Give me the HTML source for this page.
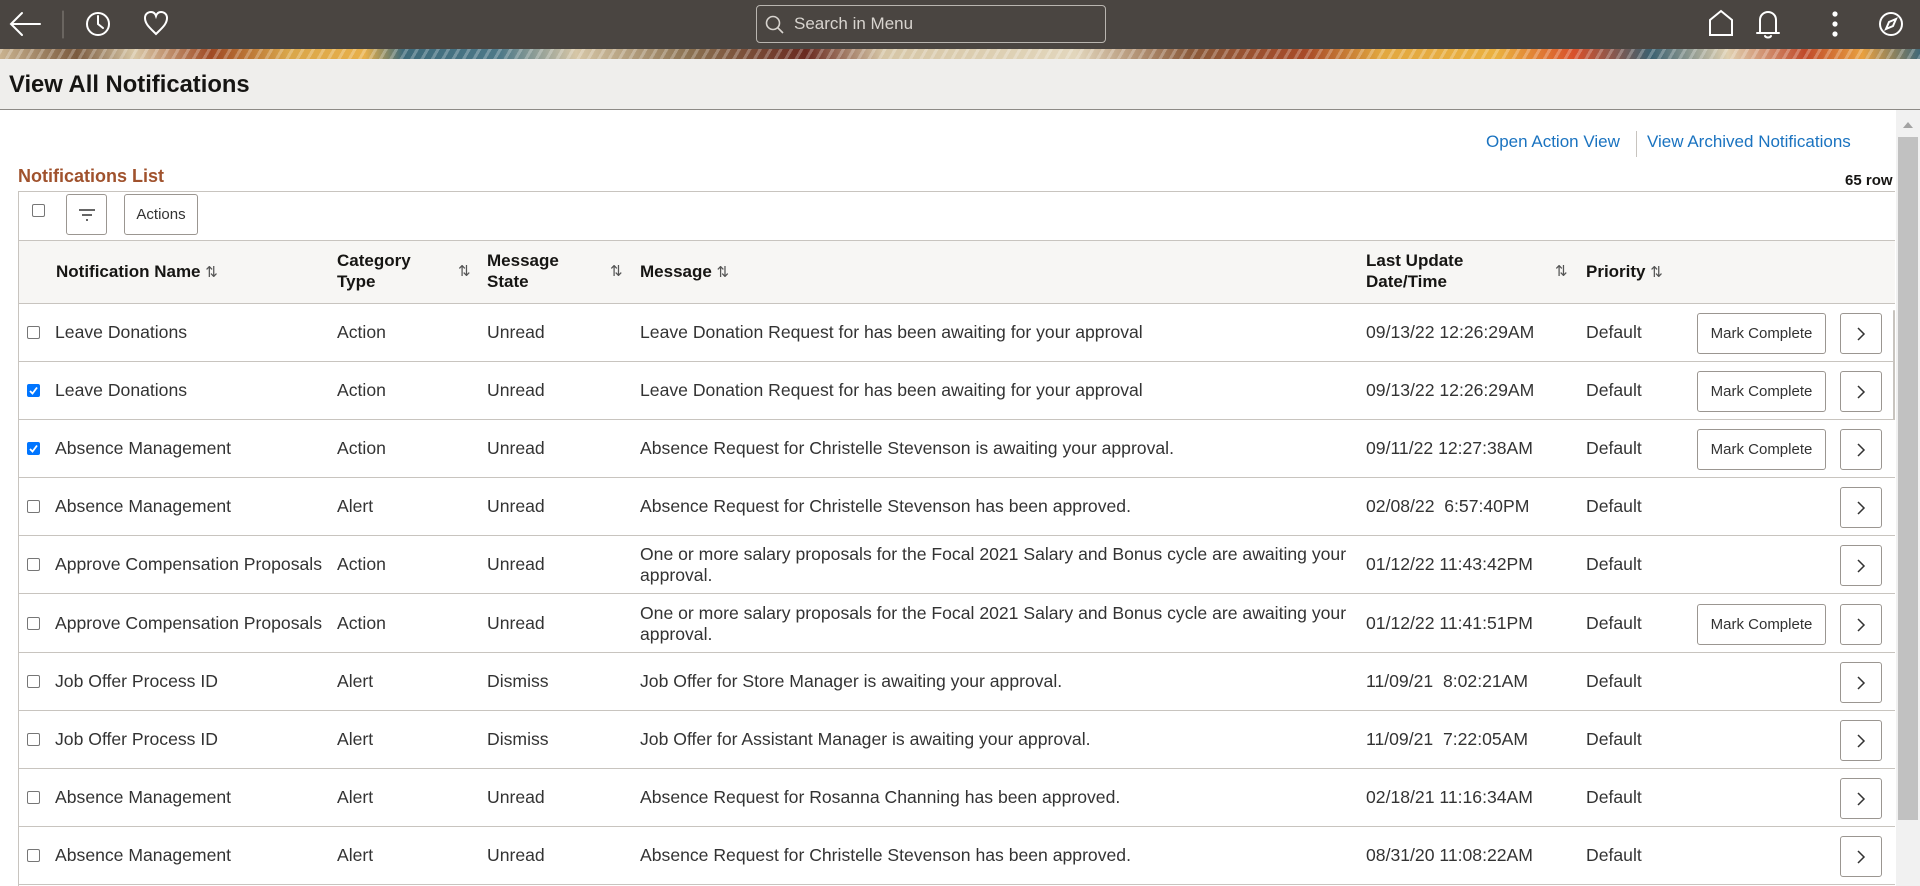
<!DOCTYPE html>
<html><head><meta charset="utf-8"><style>
*{box-sizing:border-box;margin:0;padding:0}
body{width:1920px;height:886px;overflow:hidden;background:#fff;font-family:"Liberation Sans",Arial,sans-serif;color:#333;position:relative}
.abs{position:absolute}
.top{left:0;top:0;width:1920px;height:49px;background:#4a4541}
.banner{left:0;top:49px;width:1920px;height:10px;background:repeating-linear-gradient(120deg,rgba(255,255,255,.25) 0 3px,rgba(0,0,0,0) 3px 9px),linear-gradient(90deg,#c9b28f 0,#7a5a3e 4%,#d8c7a6 7%,#a04a24 11%,#d9a64a 15%,#e8b04a 19%,#3e6a7a 21%,#4c7888 26%,#d6c6a6 30%,#8a7050 36%,#6a2a20 42%,#d6c6a6 46%,#e2d6bc 56%,#8a5a3a 62%,#a84a28 68%,#e2a840 72%,#eab040 78%,#d8502a 82%,#3a6070 86%,#e0d0b0 90%,#c04a2a 94%,#e8a040 97%,#406878 100%)}
.hdr{left:0;top:59px;width:1920px;height:51px;background:#efeeec;border-bottom:1px solid #8d8a86}
.hdr h1{position:absolute;left:9px;top:12px;font-size:23.8px;font-weight:bold;color:#161513}
.search{left:756px;top:5px;width:350px;height:38px;border:1px solid #b9b5b0;border-radius:4px}
.search span{position:absolute;left:37px;top:8px;color:#d8d4cf;font-size:17px}
.lnk{color:#1a73c0;font-size:17px;top:132px}
.th{font-weight:bold;font-size:17px;color:#161513;line-height:21px}
.row{position:absolute;left:18px;width:1877px;height:58px;border-bottom:1px solid #c8c4bf}
.row div{position:absolute;font-size:17.6px;color:#333;line-height:21px}
.cb{position:absolute;width:13px;height:13px;border:1px solid #767676;border-radius:2px;background:#fff}
.cb.on{background:#0075ff;border-color:#0075ff}
.btn{position:absolute;border:1px solid #9b9691;border-radius:3px;background:#fff;font-size:15px;color:#333;text-align:center}
.sort{font-weight:normal;font-size:15px;color:#555}
</style></head><body>
<div class="abs top"></div>
<svg class="abs" style="left:0;top:0" width="1920" height="49">
<g stroke="#fff" stroke-width="2" fill="none" stroke-linecap="round">
<path d="M40 24H12M22 13L11 24L22 35"/>
<line x1="63" y1="11" x2="63" y2="38" stroke="#8a8580" stroke-width="1"/>
<circle cx="98" cy="24" r="11"/><path d="M98 16V24L103 28"/>
<path d="M156 34C150 28 145 24 145 18C145 14 148 12 151 12C153 12 155 13 156 16C157 13 159 12 161 12C164 12 167 14 167 18C167 24 162 28 156 34Z"/>
<path d="M1710 35V20L1721 11L1732 20V35Z"/>
<path d="M1760 32V20C1760 15 1764 12 1768 12C1772 12 1776 15 1776 20V32M1757 33H1779M1765 36C1766 38 1770 38 1771 36"/>
<circle cx="1891" cy="24" r="11"/><path d="M1896 19L1893 26L1886 29L1889 22Z"/>
</g>
<g fill="#fff"><circle cx="1835" cy="14" r="2.6"/><circle cx="1835" cy="24" r="2.6"/><circle cx="1835" cy="34" r="2.6"/></g>
</svg>
<div class="abs search"><svg class="abs" style="left:8px;top:9px" width="20" height="20"><circle cx="8" cy="8" r="6.5" stroke="#d8d4cf" stroke-width="1.6" fill="none"/><path d="M13 13L18 18" stroke="#d8d4cf" stroke-width="1.6"/></svg><span>Search in Menu</span></div>
<div class="abs banner"></div>
<div class="abs hdr"><h1>View All Notifications</h1></div>

<div class="abs lnk" style="left:1486px">Open Action View</div>
<div class="abs" style="left:1636px;top:131px;width:1px;height:26px;background:#c8c4bf"></div>
<div class="abs lnk" style="left:1647px">View Archived Notifications</div>
<div class="abs" style="left:18px;top:166px;font-size:18px;font-weight:bold;color:#a0522d">Notifications List</div>
<div class="abs" style="left:1845px;top:172px;font-size:15px;font-weight:bold;color:#161513;width:50px;overflow:hidden;white-space:nowrap">65 row</div>

<div class="abs" style="left:18px;top:191px;width:1877px;height:695px;border-left:1px solid #c8c4bf;border-top:1px solid #c8c4bf"></div>
<div class="cb" style="left:32px;top:204px"></div>
<div class="btn" style="left:66px;top:194px;width:41px;height:41px"><svg width="20" height="20" style="margin-top:10px"><path d="M2 5H18M5 10H15M9 15H11" stroke="#333" stroke-width="1.5"/></svg></div>
<div class="btn" style="left:124px;top:194px;width:74px;height:41px;line-height:39px">Actions</div>

<div class="abs" style="left:19px;top:240px;width:1876px;height:64px;background:#f7f6f4;border-top:1px solid #c8c4bf;border-bottom:1px solid #c8c4bf"></div>
<div class="abs th" style="left:56px;top:261px">Notification Name <span class="sort">⇅</span></div>
<div class="abs th" style="left:337px;top:250px">Category<br>Type</div><div class="abs sort" style="left:458px;top:262px">⇅</div>
<div class="abs th" style="left:487px;top:250px">Message<br>State</div><div class="abs sort" style="left:610px;top:262px">⇅</div>
<div class="abs th" style="left:640px;top:261px">Message <span class="sort">⇅</span></div>
<div class="abs th" style="left:1366px;top:250px">Last Update<br>Date/Time</div><div class="abs sort" style="left:1555px;top:262px">⇅</div>
<div class="abs th" style="left:1586px;top:261px">Priority <span class="sort">⇅</span></div>

<div id="rows"></div>
<script>
var d=[
["Leave Donations","Action","Unread","Leave Donation Request for has been awaiting for your approval","09/13/22 12:26:29AM",1,0],
["Leave Donations","Action","Unread","Leave Donation Request for has been awaiting for your approval","09/13/22 12:26:29AM",1,1],
["Absence Management","Action","Unread","Absence Request for Christelle Stevenson is awaiting your approval.","09/11/22 12:27:38AM",1,1],
["Absence Management","Alert","Unread","Absence Request for Christelle Stevenson has been approved.","02/08/22 &nbsp;6:57:40PM",0,0],
["Approve Compensation Proposals","Action","Unread","One or more salary proposals for the Focal 2021 Salary and Bonus cycle are awaiting your approval.","01/12/22 11:43:42PM",0,0],
["Approve Compensation Proposals","Action","Unread","One or more salary proposals for the Focal 2021 Salary and Bonus cycle are awaiting your approval.","01/12/22 11:41:51PM",1,0],
["Job Offer Process ID","Alert","Dismiss","Job Offer for Store Manager is awaiting your approval.","11/09/21 &nbsp;8:02:21AM",0,0],
["Job Offer Process ID","Alert","Dismiss","Job Offer for Assistant Manager is awaiting your approval.","11/09/21 &nbsp;7:22:05AM",0,0],
["Absence Management","Alert","Unread","Absence Request for Rosanna Channing has been approved.","02/18/21 11:16:34AM",0,0],
["Absence Management","Alert","Unread","Absence Request for Christelle Stevenson has been approved.","08/31/20 11:08:22AM",0,0]];
var h="";
d.forEach(function(r,i){var t=304+i*58.1;var two=r[3].length>90;
var my=two?8:18;
h+='<div class="row" style="top:'+t+'px">'+
'<span class="cb'+(r[6]?' on':'')+'" style="left:9px;top:22px">'+(r[6]?'<svg width="11" height="11" style="position:absolute;left:0;top:0"><path d="M2 6L4.5 8.5L9 2.5" stroke="#fff" stroke-width="1.8" fill="none"/></svg>':'')+'</span>'+
'<div style="left:37px;top:18px">'+r[0]+'</div><div style="left:319px;top:18px">'+r[1]+'</div><div style="left:469px;top:18px">'+r[2]+'</div>'+
'<div style="left:622px;top:'+my+'px;width:725px">'+r[3]+'</div><div style="left:1348px;top:18px">'+r[4]+'</div><div style="left:1568px;top:18px">Default</div>'+
(r[5]?'<span class="btn" style="left:1679px;top:9px;width:129px;height:41px;line-height:39px">Mark Complete</span>':'')+
'<span class="btn" style="left:1822px;top:9px;width:42px;height:41px"><svg width="12" height="16" style="margin-top:12px"><path d="M3 2L9 8L3 14" stroke="#333" stroke-width="1.5" fill="none"/></svg></span></div>';});
document.getElementById("rows").innerHTML=h;
</script>
<div class="abs" style="left:1893px;top:310px;width:2px;height:110px;background:#c8c4bf;border-radius:1px"></div>
<div class="abs" style="left:1896px;top:110px;width:24px;height:776px;background:#f1f1f1"></div>
<svg class="abs" style="left:1896px;top:118px" width="24" height="14"><path d="M7 10L12 4L17 10Z" fill="#a3a3a3"/></svg>
<div class="abs" style="left:1898px;top:137px;width:20px;height:683px;background:#c1c1c1"></div>
</body></html>
